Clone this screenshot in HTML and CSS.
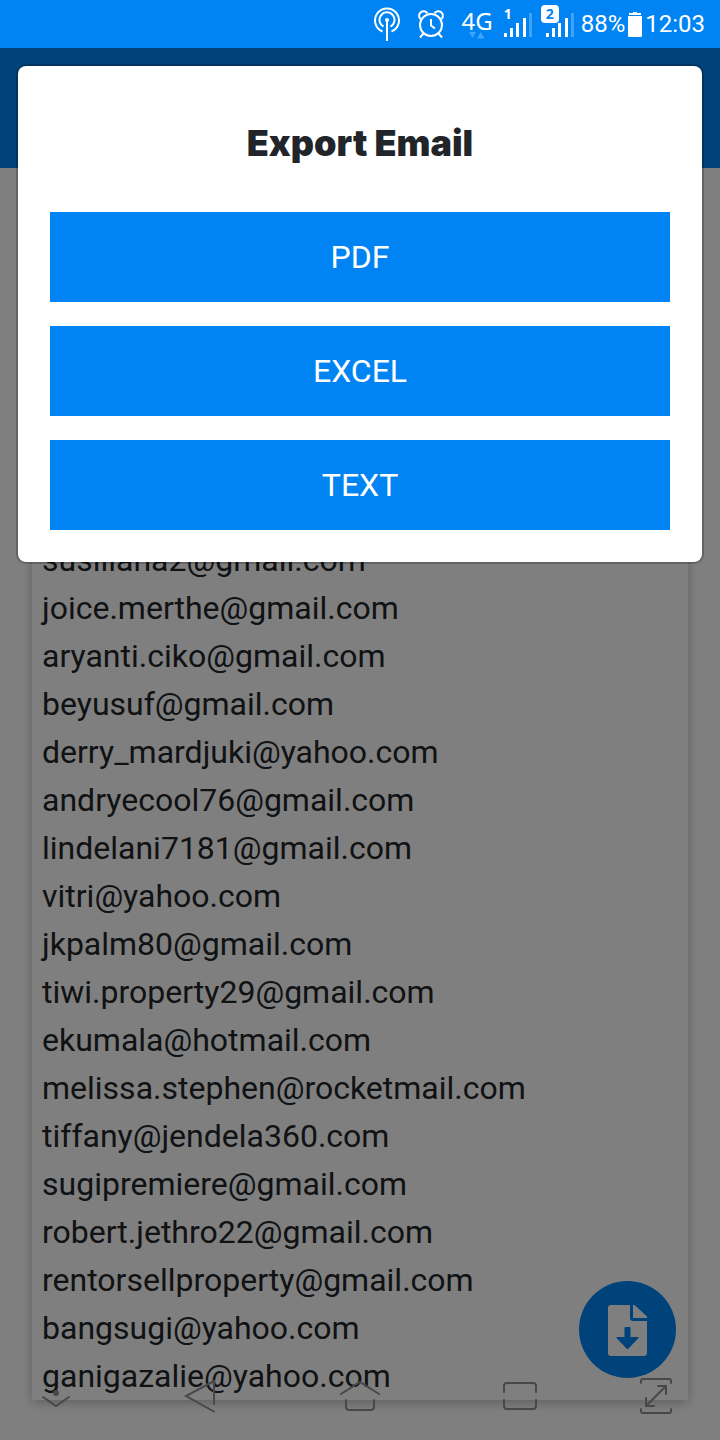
FILE: index.html
```html
<!DOCTYPE html>
<html lang="en">
<head>
<meta charset="utf-8">
<meta name="viewport" content="width=device-width, initial-scale=1">
<title>Export Email</title>
<link rel="stylesheet" href="styles.css">
</head>
<body>
<div class="screen">
  <div class="status">
    <svg class="status-cast" width="28" height="36" viewBox="0 0 28 36" fill="none" stroke="currentColor" stroke-width="2">
      <path d="M9.500 25.500A12 12 0 1 1 18.500 25.500M10.500 20.500A7.500 7.500 0 1 1 17.500 20.500M14 14V35"/>
      <circle cx="14" cy="14" r="2" fill="currentColor" stroke="none"/>
    </svg>
    <svg class="status-alarm" width="28" height="30" viewBox="0 0 28 30" fill="none" stroke="currentColor" stroke-width="2">
      <circle cx="14" cy="16" r="11"/>
      <path d="M14 10v6.500l4 3M6.500 24.500L3 28.500M21.500 24.500l3.500 4M3.500 10A4.500 4.500 0 1 1 10.500 4.500M17.500 4.500A4.500 4.500 0 1 1 24.500 10"/>
    </svg>
    <span class="network"><span>4G</span>
      <svg width="16" height="7" viewBox="0 0 16 7" fill="#40a4fa"><path d="M0 0h7L3.500 6zM8 6.500h7.500L11.700 0z"/></svg>
    </span>
    <span class="signals">
      <span class="signal"><b class="sim">1</b>
        <svg width="28" height="25" viewBox="0 0 28 25" fill="currentColor"><path d="M0 21h3v4H0zM6 16h3v9H6zM12 11h3v14h-3zM19 6h3v19h-3z"/><path d="M25 1h3v24h-3z" opacity=".25"/></svg>
      </span>
      <span class="signal"><b class="sim sim-active">2</b>
        <svg width="28" height="25" viewBox="0 0 28 25" fill="currentColor"><path d="M0 21h3v4H0zM6 16h3v9H6zM12 11h3v14h-3zM19 6h3v19h-3z"/><path d="M25 1h3v24h-3z" opacity=".25"/></svg>
      </span>
    </span>
    <span class="reading">88%</span>
    <svg class="battery" width="14" height="25" viewBox="0 0 14 25" fill="currentColor"><path d="M5 0h4v1h4v2H1V1h4zM0 4h14v19.500a1.500 1.500 0 0 1-1.500 1.500h-11A1.500 1.500 0 0 1 0 23.500z"/></svg>
    <span class="reading">12:03</span>
  </div>

  <div class="page">
    <header class="app-bar"></header>
    <main class="content">
      <ul class="emails">
        <li>susiliana2@gmail.com</li>
        <li>joice.merthe@gmail.com</li>
        <li>aryanti.ciko@gmail.com</li>
        <li>beyusuf@gmail.com</li>
        <li>derry_mardjuki@yahoo.com</li>
        <li>andryecool76@gmail.com</li>
        <li>lindelani7181@gmail.com</li>
        <li>vitri@yahoo.com</li>
        <li>jkpalm80@gmail.com</li>
        <li>tiwi.property29@gmail.com</li>
        <li>ekumala@hotmail.com</li>
        <li>melissa.stephen@rocketmail.com</li>
        <li>tiffany@jendela360.com</li>
        <li>sugipremiere@gmail.com</li>
        <li>robert.jethro22@gmail.com</li>
        <li>rentorsellproperty@gmail.com</li>
        <li>bangsugi@yahoo.com</li>
        <li>ganigazalie@yahoo.com</li>
      </ul>
    </main>
    <button class="fab" type="button" aria-label="Export">
      <svg width="40" height="52" viewBox="0 0 40 52"><path fill="#fff" d="M3 1h19v13q0 3 3 3h14v32a3 3 0 0 1-3 3H3a3 3 0 0 1-3-3V4a3 3 0 0 1 3-3zM25 1h1.500L39 12.500V14H25z"/><path fill="#0084f4" d="M17.500 23h4q1 0 1 1v9h7q2 0 .6 1.600L20.500 44.500q-1 1-2 0L8.900 34.600Q7.500 33 9.500 33h7v-9q0-1 1-1z"/></svg>
    </button>

    <div class="backdrop">
      <section class="dialog" role="dialog" aria-modal="true" aria-labelledby="dialog-title">
        <h1 class="dialog-title" id="dialog-title">Export Email</h1>
        <button class="option" type="button">PDF</button>
        <button class="option" type="button">EXCEL</button>
        <button class="option" type="button">TEXT</button>
      </section>
    </div>
  </div>

  <nav class="nav" aria-label="System">
    <button class="nav-key" type="button" aria-label="Hide bar">
      <svg width="40" height="40" viewBox="0 0 40 40"><circle cx="20" cy="17" r="3" fill="currentColor" stroke="none"/><path d="M7 21l13 9 13-9"/></svg>
    </button>
    <button class="nav-key" type="button" aria-label="Back">
      <svg width="40" height="40" viewBox="0 0 40 40"><path d="M34 28V5L6 20l28 15.500"/></svg>
    </button>
    <button class="nav-key" type="button" aria-label="Home">
      <svg width="40" height="40" viewBox="0 0 40 40"><path d="M1 18L20 6l19 12M6 24v7q0 3 3 3h22q3 0 3-3v-7"/></svg>
    </button>
    <button class="nav-key" type="button" aria-label="Recent apps">
      <svg width="40" height="40" viewBox="0 0 40 40"><path d="M4 16v-6q0-3 3-3h26q3 0 3 3v6M4 24v6q0 3 3 3h26q3 0 3-3v-6"/></svg>
    </button>
    <button class="nav-key" type="button" aria-label="Full screen">
      <svg width="40" height="40" viewBox="0 0 40 40"><path d="M5 7V5q0-2 2-2h26q2 0 2 2v2M5 33v2q0 2 2 2h26q2 0 2-2v-2M10 30l20-20M22 10h8v8M10 22v8h8"/></svg>
    </button>
  </nav>
</div>
</body>
</html>
```
FILE: styles.css
```css
* { box-sizing: border-box; }
body { margin: 0; font-family: Roboto, "Liberation Sans", sans-serif; }
button { font: inherit; border: 0; padding: 0; cursor: pointer; }

.screen {
  position: relative;
  display: flex;
  flex-direction: column;
  min-height: 100vh;
}

/* System status bar */
.status {
  display: flex;
  align-items: center;
  justify-content: flex-end;
  height: 48px;
  padding-right: 15px;
  background: #0084f4;
  color: #fff;
  gap: 3px;
}
.status-cast,
.status-alarm { margin-right: 13px; }
.network {
  display: flex;
  flex-direction: column;
  align-items: center;
  margin-right: 8px;
  font: 24px/24px "Noto Sans", sans-serif;
}
.network svg { margin-top: -1px; }
.signals { display: flex; gap: 14px; margin-right: 4px; }
.signal { position: relative; display: flex; }
.sim {
  position: absolute;
  top: -7px;
  left: 0;
  font: bold 14px/18px "Noto Sans", sans-serif;
}
.sim-active {
  left: -5px;
  width: 18px;
  border-radius: 4px;
  background: #fff;
  color: #0084f4;
  text-align: center;
}
.reading { font-size: 24px; line-height: 32px; }

/* Application page */
.page {
  position: relative;
  flex: 1;
  display: flex;
  flex-direction: column;
  background: #fff;
}
.app-bar { height: 120px; background: #0084f4; }
.content {
  flex: 1;
  display: flex;
  flex-direction: column;
  justify-content: flex-end;
  padding: 0 32px 40px;
}
.emails {
  margin: 0;
  padding: 0 10px;
  list-style: none;
  background: #fff;
  box-shadow: 0 3px 10px rgba(0, 0, 0, .25);
  color: #212529;
  font-size: 32px;
  line-height: 48px;
}
.fab {
  position: absolute;
  right: 44px;
  bottom: 62px;
  display: grid;
  place-items: center;
  width: 97px;
  height: 97px;
  border-radius: 50%;
  background: #0084f4;
}

/* Export dialog */
.backdrop {
  position: absolute;
  inset: 0;
  padding: 18px;
  background: rgba(0, 0, 0, .5);
}
.dialog {
  display: flex;
  flex-direction: column;
  gap: 24px;
  padding: 48px 32px 32px;
  border-radius: 8px;
  background: #fff;
  box-shadow: 0 0 0 2px rgba(0, 0, 0, .2);
}
.dialog-title {
  margin: 0 0 16px;
  color: #212529;
  font: 900 36px/58px Inter, sans-serif;
  text-align: center;
}
.option {
  min-height: 90px;
  background: #0084f4;
  color: #fff;
  font-size: 32px;
}

/* System navigation keys */
.nav {
  position: absolute;
  inset: auto 0 0;
  display: grid;
  grid-template-columns: 112fr 176fr 144fr 176fr 96fr 16fr;
  height: 88px;
}
.nav-key {
  display: grid;
  place-items: center;
  background: none;
  color: #484848;
}
.nav-key svg {
  fill: none;
  stroke: currentColor;
  stroke-width: 2;
  stroke-linecap: round;
}
```
